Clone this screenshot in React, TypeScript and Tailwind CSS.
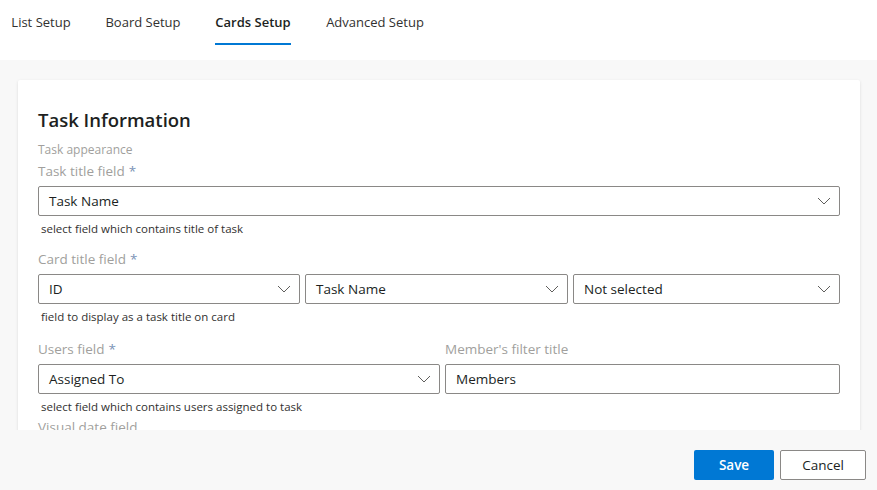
import React from "react";

const font = { fontFamily: '"Open Sans", "Noto Sans", sans-serif' };

const tabs = [
  { name: "List Setup", w: "w-[60px]" },
  { name: "Board Setup", w: "w-[76px]" },
  { name: "Cards Setup", w: "w-[76px]" },
  { name: "Advanced Setup", w: "w-[100px]" },
];

const Chevron = () => (
  <svg width="14" height="8" viewBox="0 0 14 8" fill="none">
    <path d="M1 1l6 6 6-6" stroke="#605e5c" strokeWidth="1" />
  </svg>
);

const Label = ({ text, required }: { text: string; required?: boolean }) => (
  <div className="text-[13.5px] leading-5 text-[#a19f9d]">
    {text}
    {required && <span className="ml-1 text-[#7b93b6]">*</span>}
  </div>
);

const Select = ({ value, className = "" }: { value: string; className?: string }) => (
  <div
    className={`flex h-[30px] items-center justify-between rounded-[2px] border border-[#8a8886] bg-white pl-[10px] pr-[8px] text-[13.5px] text-[#201f1e] ${className}`}
  >
    <span>{value}</span>
    <Chevron />
  </div>
);

const TextInput = ({ value, className = "" }: { value: string; className?: string }) => (
  <div
    className={`flex h-[30px] items-center rounded-[2px] border border-[#8a8886] bg-white px-[10px] text-[13.5px] text-[#201f1e] ${className}`}
  >
    {value}
  </div>
);

const Helper = ({ text }: { text: string }) => (
  <div className="mt-[5px] pl-[3px] text-[11.5px] leading-4 text-[#323130]">{text}</div>
);

export default function App() {
  return (
    <div className="flex h-[490px] w-[877px] flex-col overflow-hidden bg-white" style={font}>
      <div className="flex h-[60px] shrink-0 items-start gap-[34px] bg-white pl-[11px]">
        {tabs.map((t) => {
          const active = t.name === "Cards Setup";
          return (
            <div
              key={t.name}
              className={`flex h-[45px] items-center justify-center whitespace-nowrap pt-[2px] text-[13px] ${t.w} ${
                active
                  ? "border-b-2 border-[#0078d4] font-semibold text-[#201f1e]"
                  : "border-b-2 border-transparent text-[#323130]"
              }`}
            >
              {t.name}
            </div>
          );
        })}
      </div>

      <div className="h-[370px] shrink-0 overflow-hidden bg-[#f8f8f8] pl-[18px] pr-[17px] pt-[20px]">
        <div className="rounded-[2px] bg-white px-[20px] pt-[26px] pb-8 shadow-[0_1px_3px_rgba(0,0,0,0.12)]">
          <h2 className="text-[18.5px] font-semibold leading-7 text-[#201f1e]">Task Information</h2>

          <div className="mt-[8px] text-[12px] leading-4 text-[#a19f9d]">Task appearance</div>

          <div className="mt-[3px]">
            <Label text="Task title field" required />
            <Select value="Task Name" className="mt-[5px] w-full" />
            <Helper text="select field which contains title of task" />
          </div>

          <div className="mt-[12px]">
            <Label text="Card title field" required />
            <div className="mt-[5px] flex gap-[5px]">
              <Select value="ID" className="w-[262px] shrink-0" />
              <Select value="Task Name" className="w-[263px] shrink-0" />
              <Select value="Not selected" className="flex-1" />
            </div>
            <Helper text="field to display as a task title on card" />
          </div>

          <div className="mt-[14px] flex gap-[5px]">
            <div className="w-[402px] shrink-0">
              <Label text="Users field" required />
              <Select value="Assigned To" className="mt-[5px] w-full" />
              <Helper text="select field which contains users assigned to task" />
            </div>
            <div className="flex-1">
              <Label text="Member's filter title" />
              <TextInput value="Members" className="mt-[5px] w-full" />
            </div>
          </div>

          <div className="mt-[2px]">
            <Label text="Visual date field" />
          </div>
        </div>
      </div>

      <div className="flex flex-1 items-start justify-end gap-[6px] bg-[#f8f8f8] pr-[11px] pt-[20px]">
        <button className="h-[30px] w-[80px] rounded-[2px] bg-[#0078d4] text-[13.5px] font-semibold text-white">
          Save
        </button>
        <button className="h-[30px] w-[86px] rounded-[2px] border border-[#8a8886] bg-white text-[13.5px] text-[#201f1e]">
          Cancel
        </button>
      </div>
    </div>
  );
}
